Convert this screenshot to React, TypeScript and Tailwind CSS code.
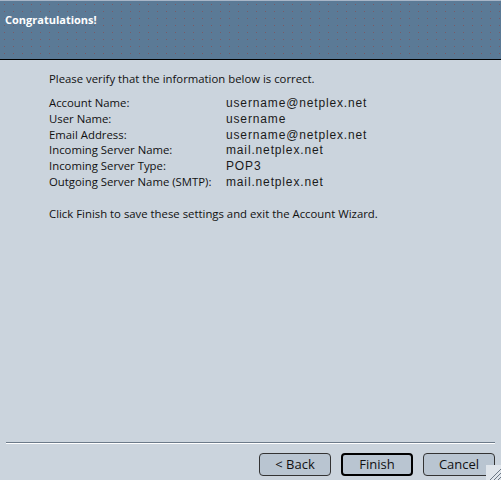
const rows = [
  { label: 'Account Name:', value: 'username@netplex.net' },
  { label: 'User Name:', value: 'username' },
  { label: 'Email Address:', value: 'username@netplex.net' },
  { label: 'Incoming Server Name:', value: 'mail.netplex.net' },
  { label: 'Incoming Server Type:', value: 'POP3' },
  { label: 'Outgoing Server Name (SMTP):', value: 'mail.netplex.net' },
]

function ResizeGrip() {
  return (
    <svg width="15" height="15" viewBox="0 0 15 15" className="absolute right-0 bottom-0">
      <rect x="0" y="0" width="15" height="15" fill="#dfe5eb" />
      <line x1="4" y1="15" x2="15" y2="4" stroke="#6b7785" strokeWidth="1" />
      <line x1="8" y1="15" x2="15" y2="8" stroke="#6b7785" strokeWidth="1" />
      <line x1="12" y1="15" x2="15" y2="12" stroke="#6b7785" strokeWidth="1" />
    </svg>
  )
}

export default function App() {
  return (
    <div
      className="relative w-[501px] h-[480px] flex flex-col bg-[#cbd4dd] overflow-hidden"
      style={{ fontFamily: '"Open Sans", "DejaVu Sans", sans-serif' }}
    >
      {/* Header */}
      <div className="h-[60px] shrink-0 border-t border-[#a7b5c7] border-b border-b-black bg-[#5b7a96] bg-[radial-gradient(#7a5a66_0.6px,transparent_0.8px)] bg-[length:9px_7px]">
        <div className="pl-[5px] pt-[11px] text-[11px] font-bold text-white leading-[16px]">
          Congratulations!
        </div>
      </div>

      {/* Body */}
      <div className="flex-1 pl-[49px] pt-[11px] text-[11.35px] text-[#111] leading-[16px]">
        <div>Please verify that the information below is correct.</div>
        <div className="mt-[8px] flex flex-col">
          {rows.map((row) => (
            <div key={row.label} className="flex h-[15.8px] items-center">
              <div className="w-[177px]">{row.label}</div>
              <div
                className="text-[12px] tracking-[0.85px] text-[#1a1a1a]"
                style={{ fontFamily: '"Liberation Sans", Arial, sans-serif' }}
              >
                {row.value}
              </div>
            </div>
          ))}
        </div>
        <div className="mt-[16px]">Click Finish to save these settings and exit the Account Wizard.</div>
      </div>

      {/* Footer */}
      <div className="shrink-0 px-[6px]">
        <div className="border-t border-[#6c7a89] border-b border-b-white" />
      </div>
      <div className="shrink-0 flex justify-end gap-[10px] pr-[6px] pt-[9px] pb-[4px] text-[13px] text-[#111]">
        <button className="w-[72px] h-[23px] rounded-[4px] border border-[#333] bg-[#b9c5d1]">&lt; Back</button>
        <button className="w-[72px] h-[23px] rounded-[4px] border-2 border-black bg-[#b9c5d1]">Finish</button>
        <button className="w-[72px] h-[23px] rounded-[4px] border border-[#333] bg-[#b9c5d1]">Cancel</button>
      </div>
      <ResizeGrip />
    </div>
  )
}
